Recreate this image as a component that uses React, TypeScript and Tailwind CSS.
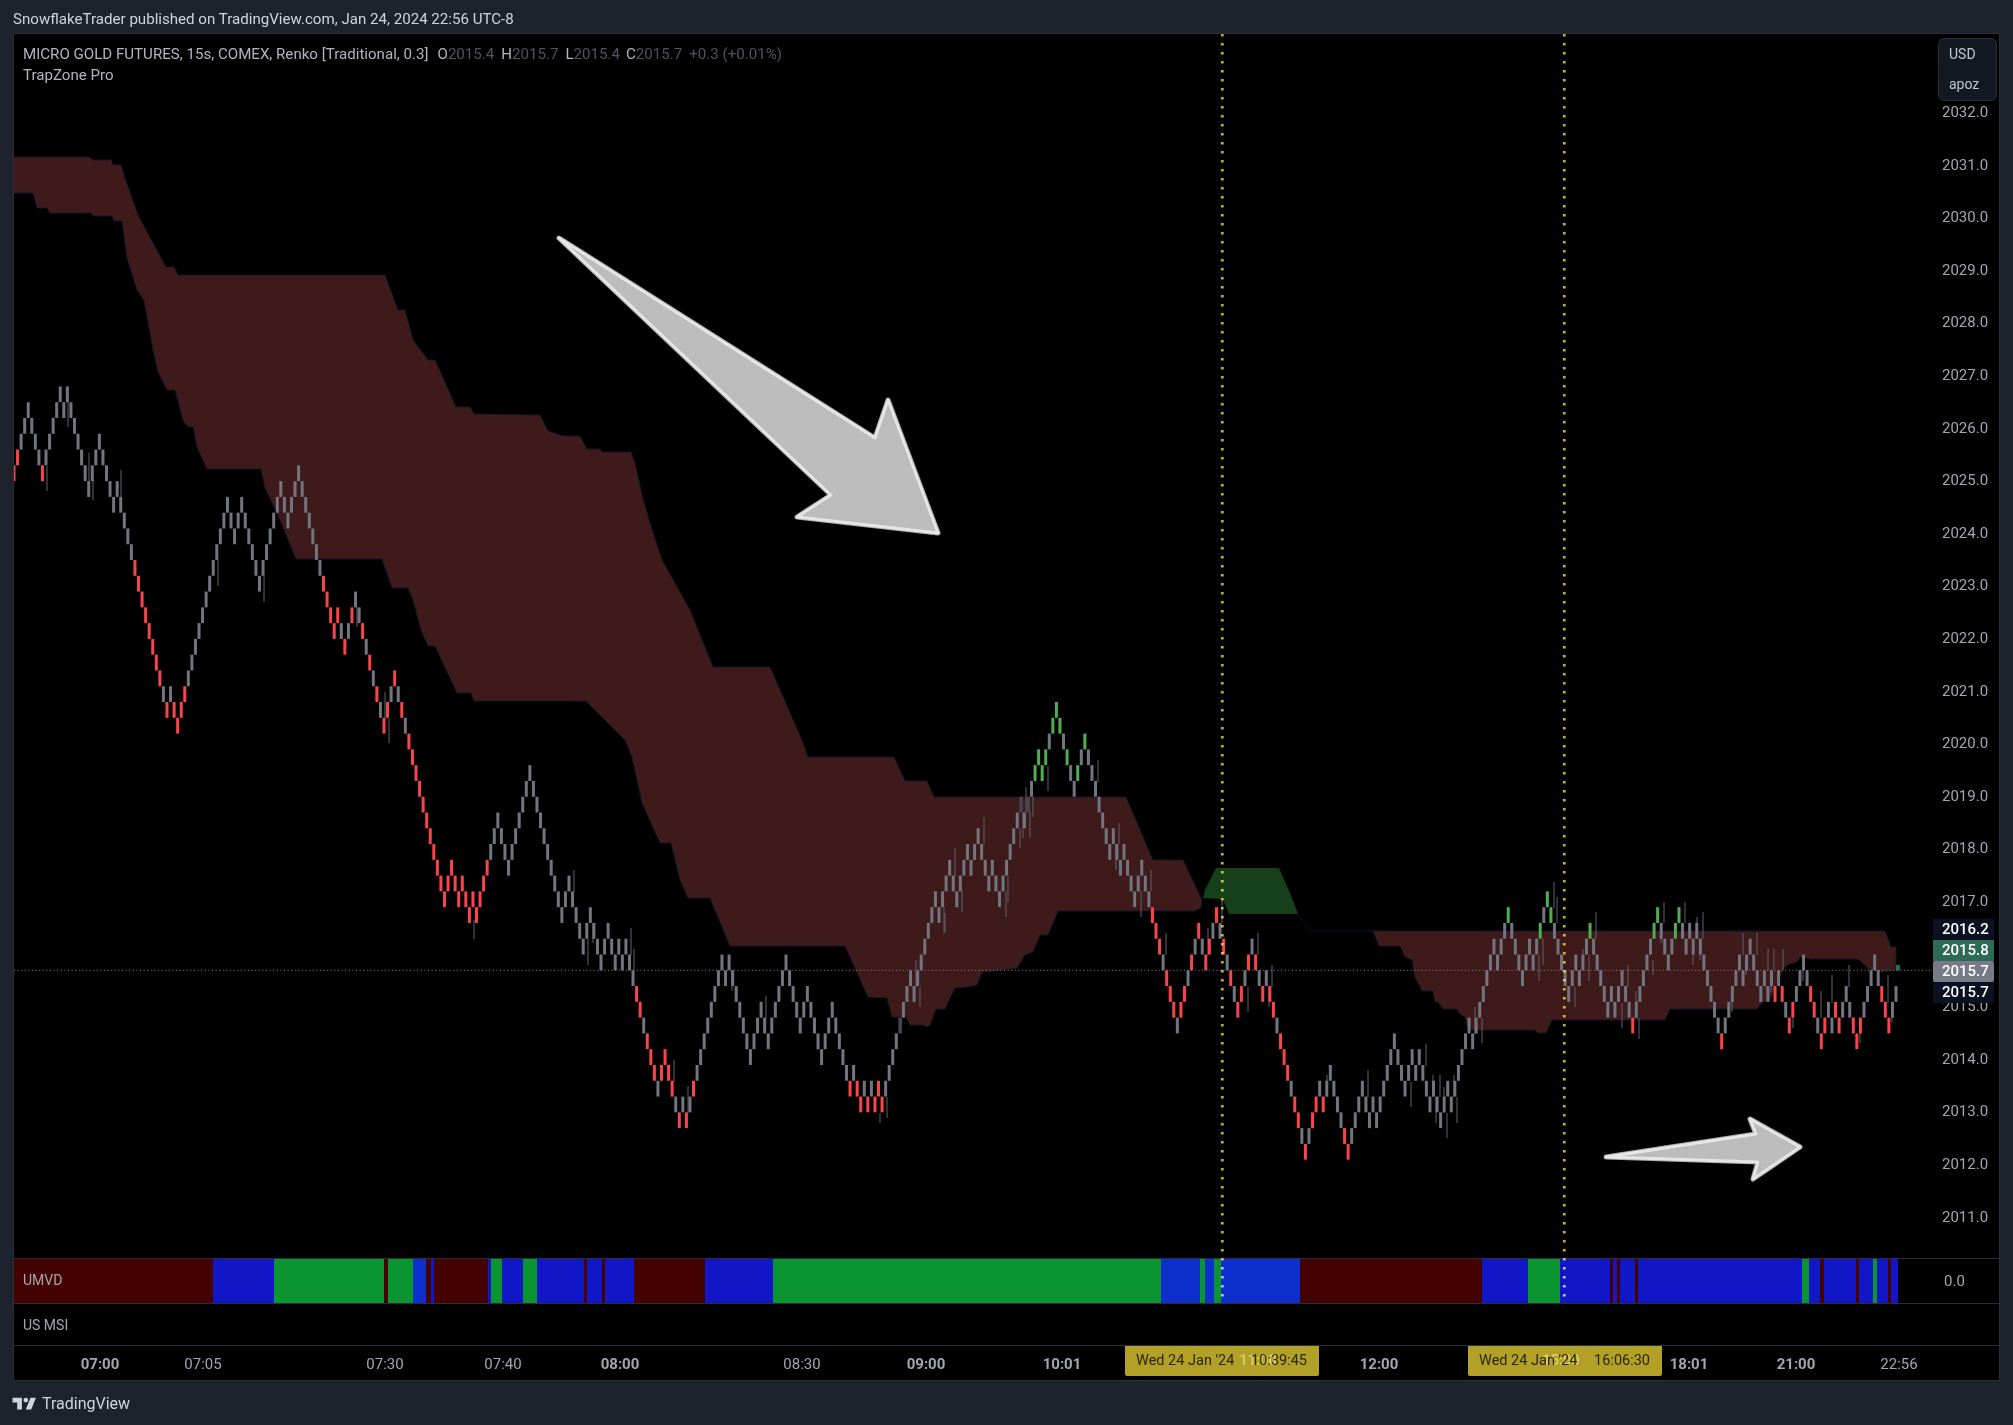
import React from 'react';

// one char per renko brick: u/d gray, R/r red, G/g green, N dark gray (upper case / u = up)
const BRICKS = [
  'RRuuu dddr uuuuu d u dddddd uuu dddd u dddd rrrrrrrrdr u rr RRuuuuuuuuuuuu dd uu ddddd uuuuuu dd uuu',
  'dddddd rrrr R dr uRu drdrdrdr RuR drdrrr rrrrrrrr RR rr R rr R r',
  'RRRuuu ddd uuuuuu ddddddddd uu dddd uu ddd uu dd u d u ddrrdrrrd RR rrdr u r uRuuuuuuuu d u dddddd',
  'uuu dd uuuuu dddd uu dddd uuu ddddr u rr u r u r R r uuuuNuuu d uuuuuu d uuu dd uuu d uu',
  'ddd u dd uuuuuN d NuGG g GuGG gdgdd GuG ddddddd u dd u ddd uu ddrrrdrrrd RRuRuR dr RuR drdrdr RuRu rdr u rrdrrrdrrdr',
  'uRRu r uu dddrr uuuu dd u d uuuuu ddd uu d u ddd u dd uu d uuuuu d uuuuuu d uuG dddd uu d uGuG gddddd',
  'uu d uuG ddddd u d uu ddr uuuuuGG ddd uGG dd u d u ddddddr uuuuu d uu ddd u d u r u rdr Ruuu drrdr Ru d R r uu drr Ruuuu drrr uu',
].join('').replace(/\s/g, '');

const PRICE_Y = 970.3;
const BRICK_H = 15.78;
const FIRST_X = 14;
const LAST_X = 1896;

function buildBricks() {
  const step = (LAST_X - FIRST_X) / (BRICKS.length - 1);
  let open = 31;
  let close = 31;
  let prevUp = true;
  return BRICKS.split('').map((ch, i) => {
    const up = 'uRGN'.includes(ch);
    const from = up === prevUp ? close : open;
    const to = from + (up ? 1 : -1);
    open = from;
    close = to;
    prevUp = up;
    const top = PRICE_Y - Math.max(from, to) * BRICK_H;
    const low = ch.toLowerCase();
    const color = low === 'r' ? '#f8444b' : low === 'g' ? '#4caf50' : ch === 'N' ? '#434651' : '#72757f';
    return { x: FIRST_X + i * step, y: top, color, dark: ch === 'N' };
  });
}

const WICKS = [
  [47, 466, 491], [68, 402, 427], [89, 453, 497], [93, 480, 500], [121, 470, 497], [218, 560, 586], [264, 576, 602],
  [357, 607, 627], [385, 692, 718], [389, 718, 743], [474, 920, 939], [574, 870, 892], [588, 939, 965], [593, 923, 943], [631, 928, 955],
  [634, 949, 970], [674, 1060, 1082], [688, 1086, 1113], [732, 970, 991], [766, 996, 1018], [880, 1113, 1123],
  [887, 1097, 1118], [916, 960, 987], [920, 987, 1007], [945, 913, 933], [955, 848, 876], [962, 890, 912], [984, 817, 844],
  [944, 907, 933], [1006, 891, 917], [1008, 876, 902], [1020, 828, 848], [1023, 812, 838], [1026, 787, 812],
  [1030, 812, 838], [1033, 797, 817], [1048, 766, 791], [1098, 760, 782], [1119, 823, 844], [1116, 844, 870],
  [1141, 891, 917], [1151, 870, 891], [1166, 933, 955], [1208, 928, 955], [1222, 900, 923], [1248, 987, 1012],
  [1258, 933, 955], [1269, 987, 1007], [1272, 965, 987], [1327, 1075, 1097], [1368, 1070, 1097], [1411, 1082, 1107],
  [1426, 1044, 1066], [1433, 1075, 1097], [1436, 1097, 1123], [1440, 1075, 1097], [1444, 1087, 1113], [1447, 1113, 1138],
  [1454, 1075, 1097], [1457, 1097, 1123], [1475, 1007, 1034], [1482, 1018, 1043], [1539, 955, 981], [1543, 939, 965],
  [1554, 882, 908], [1557, 897, 923], [1575, 987, 1007], [1583, 949, 970], [1589, 955, 981], [1596, 912, 939],
  [1622, 1003, 1028], [1628, 965, 987], [1636, 991, 1018], [1639, 1018, 1039], [1653, 960, 975], [1661, 923, 943],
  [1664, 902, 923], [1685, 902, 923], [1693, 939, 965], [1697, 917, 939], [1700, 939, 960], [1703, 912, 939],
  [1732, 987, 1012], [1743, 933, 955], [1746, 955, 975], [1757, 933, 955], [1768, 949, 970], [1771, 970, 992],
  [1774, 949, 970], [1783, 949, 970], [1793, 1003, 1028], [1803, 970, 981], [1821, 991, 1018], [1832, 975, 1003],
  [1849, 965, 987], [1860, 1018, 1043], [1888, 975, 1003], [1892, 1003, 1022],
];

const RIBBON_MAIN =
  '13,157 89,157 93,160 111,160 113,165 121,165 125,178 138,215 166,267 174,267 178,275 385,275 398,310 405,310 413,340 428,360 435,360 456,407 470,407 474,414 540,415 548,431 563,436 580,436 587,449 600,449 602,452 631,452 635,463 642,495 650,523 662,560 690,610 713,667 770,667 802,740 808,757 894,757 905,781 927,781 934,797 1126,797 1153,860 1183,860 1202,900 1201,908 1195,911 ' +
  '1058,911 1048,935 1040,935 1033,952 1025,955 1017,968 1003,970 982,972 977,985 967,987 955,988 945,1009 936,1009 930,1025 927,1027 924,1025 910,1025 906,1017 892,1017 887,998 868,997 845,946 730,946 710,898 688,898 680,880 671,843 660,843 642,803 632,757 625,740 586,701 474,701 471,693 457,693 435,646 428,646 421,630 413,600 408,588 392,588 382,559 296,559 277,513 265,488 261,469 207,469 197,447 193,427 188,427 183,420 175,390 167,390 158,372 153,350 144,300 137,290 127,258 122,221 114,221 112,216 93,216 91,213 50,213 47,208 37,208 33,193 13,193';

const RIBBON_RIGHT =
  '1373,931 1885,931 1891,947 1896,947 1896,970 1880,972 1870,970 1858,959 1810,959 1800,957 1797,962 1787,965 1783,970 1775,988 1770,1000 1763,1002 1757,1009 1670,1009 1665,1020 1552,1020 1546,1033 1538,1033 1535,1030 1468,1030 1465,1017 1460,1014 1457,1009 1443,1009 1438,1002 1435,1002 1433,991 1422,991 1415,977 1412,960 1405,957 1400,946 1379,946';

const GREEN_ZONE = '1216,868 1279,868 1290,893 1298,914 1229,914 1223,899 1203,898 1205,890';
const BIG_ARROW = '559,238 875,438 888,400 938,533 797,517 831,495';
const SMALL_ARROW = '1606,1157 1756,1134 1750,1119 1800,1147 1753,1179 1758,1162';

// 2016.0 sits under the badges in the picture, so its row stays empty
const PRICES = [
  '2032.0', '2031.0', '2030.0', '2029.0', '2028.0', '2027.0', '2026.0', '2025.0', '2024.0', '2023.0', '2022.0',
  '2021.0', '2020.0', '2019.0', '2018.0', '2017.0', '', '2015.0', '2014.0', '2013.0', '2012.0', '2011.0',
];

const BADGES = [
  { text: '2016.2', cls: 'bg-[#0b1022] text-white' },
  { text: '2015.8', cls: 'bg-[#2e6b55] text-white' },
  { text: '2015.7', cls: 'bg-[#787b86] text-white rounded-[2px]' },
  { text: '2015.7', cls: 'bg-[#0b1022] text-white' },
];

const RED = '#450202';
const BLUE = '#1117c6';
const BRIGHT = '#0c2fcd';
const GREEN = '#0a9531';

// UMVD segments: colour and right edge
const UMVD: [string, number][] = [
  [RED, 213], [BLUE, 274], [GREEN, 384], [RED, 388], [GREEN, 413], [BRIGHT, 426], [RED, 431], [BLUE, 434], [RED, 488],
  [BLUE, 491], [GREEN, 502], [BLUE, 523], [GREEN, 537], [BLUE, 584], [RED, 587], [BLUE, 602], [RED, 605], [BLUE, 634],
  [RED, 705], [BLUE, 773], [GREEN, 1161], [BRIGHT, 1200], [GREEN, 1205], [BRIGHT, 1214], [GREEN, 1221], [BRIGHT, 1300],
  [RED, 1482], [BLUE, 1528], [GREEN, 1560], [BLUE, 1610], [RED, 1613], [BLUE, 1617], [RED, 1620], [BLUE, 1635],
  [RED, 1638], [BLUE, 1802], [GREEN, 1809], [BLUE, 1820], [RED, 1824], [BLUE, 1856], [RED, 1859], [BLUE, 1873],
  [GREEN, 1877], [BLUE, 1888], [RED, 1891], [BLUE, 1898],
];

const TIMES: { x: number; text: string; bold?: boolean }[] = [
  { x: 100, text: '07:00', bold: true },
  { x: 203, text: '07:05' },
  { x: 385, text: '07:30' },
  { x: 503, text: '07:40' },
  { x: 620, text: '08:00', bold: true },
  { x: 802, text: '08:30' },
  { x: 926, text: '09:00', bold: true },
  { x: 1062, text: '10:01', bold: true },
  { x: 1379, text: '12:00', bold: true },
  { x: 1689, text: '18:01', bold: true },
  { x: 1796, text: '21:00', bold: true },
  { x: 1899, text: '22:56' },
];

const MARKS = [
  { x: 1125, ghostX: 1258, ghost: '11:00', time: '10:39:45' },
  { x: 1468, ghostX: 1561, ghost: '15:00', time: '16:06:30' },
];

function PriceChart() {
  const bricks = buildBricks();
  return (
    <svg viewBox="14 34 1919 1225" className="block h-[1225px] w-[1919px]">
      <polygon points={RIBBON_MAIN} fill="#3e1a1a" stroke="#17152a" strokeWidth="1" />
      <polygon points={RIBBON_RIGHT} fill="#3e1a1a" stroke="#17152a" strokeWidth="1" />
      <polygon points={GREEN_ZONE} fill="#16401a" />
      <polyline points="1298,914 1310,931 1373,931" fill="none" stroke="#0c1226" strokeWidth="1" />
      {WICKS.map(([x, y1, y2], i) => (
        <line key={i} x1={x} x2={x} y1={y1} y2={y2} stroke="#5f626c" strokeWidth="1" />
      ))}
      {bricks.map((b, i) => (
        <rect key={i} x={b.x - 1.5} y={b.y} width={b.dark ? 3.6 : 3} height={BRICK_H} fill={b.color} />
      ))}
      <rect x="1896" y="965" width="4" height="5.5" fill="#2e6b55" />
      <line x1="14" x2="1933" y1={PRICE_Y} y2={PRICE_Y} stroke="#85888f" strokeWidth="1" strokeDasharray="1 2.6" />
      {[BIG_ARROW, SMALL_ARROW].map((pts) => (
        <g key={pts} strokeLinejoin="round">
          <polygon points={pts} fill="#bcbcbc" stroke="#a9a9a9" strokeWidth="5" />
          <polygon points={pts} fill="#bcbcbc" stroke="#e6e6e6" strokeWidth="2.8" />
        </g>
      ))}
    </svg>
  );
}

function Legend() {
  return (
    <div className="absolute left-[9px] top-[10px] text-[15.1px] leading-[21px] text-[#b2b5be]">
      <div className="flex">
        <span>MICRO GOLD FUTURES, 15s, COMEX, Renko [Traditional, 0.3]</span>
        <span className="ml-[9px]">O<span className="text-[#50535e]">2015.4</span></span>
        <span className="ml-[7px]">H<span className="text-[#50535e]">2015.7</span></span>
        <span className="ml-[7px]">L<span className="text-[#50535e]">2015.4</span></span>
        <span className="ml-[6px]">C<span className="text-[#50535e]">2015.7</span></span>
        <span className="ml-[7px] text-[#50535e]">+0.3 (+0.01%)</span>
      </div>
      <div>TrapZone Pro</div>
    </div>
  );
}

function PriceAxis() {
  return (
    <div className="relative flex-1 pt-[52px] text-[15px] text-[#a3a6af]">
      {PRICES.map((p, i) => (
        <div key={i} className="flex h-[52.6px] items-center pl-[9px]">
          {p}
        </div>
      ))}
      <div className="absolute left-0 top-[885px] w-[61px] font-medium">
        {BADGES.map((b, i) => (
          <div key={i} className={`flex h-[21px] items-center pl-[9px] ${b.cls}`}>
            {b.text}
          </div>
        ))}
      </div>
      <div className="absolute left-[5px] top-[4px] flex h-[63px] w-[59px] flex-col justify-around rounded-[6px] border border-[#2a2e39] bg-[#141823] pl-[10px] text-[14px] text-[#c3c6cf]">
        <span>USD</span>
        <span>apoz</span>
      </div>
    </div>
  );
}

function VerticalMarks() {
  return (
    <svg viewBox="14 34 1986 1266" className="pointer-events-none absolute left-0 top-0 h-[1266px] w-[1986px] mix-blend-screen">
      {[1222.3, 1564.3].map((x) => (
        <line key={x} x1={x} x2={x} y1="34" y2="1300" stroke="#c4ae22" strokeWidth="2.8" strokeDasharray="2.6 6.4" />
      ))}
    </svg>
  );
}

function TimeAxis() {
  return (
    <div className="relative h-[34px] text-[15px] text-[#a3a6af]">
      {TIMES.map((t) => (
        <span
          key={t.text}
          className={`absolute top-[7px] -translate-x-1/2 ${t.bold ? 'font-bold' : ''}`}
          style={{ left: t.x - 14 }}
        >
          {t.text}
        </span>
      ))}
      {MARKS.map((m) => (
        <div
          key={m.time}
          className="absolute top-0 flex h-[30px] w-[194px] items-center rounded-b-[2px] bg-[#b2a126] text-[14.5px] text-[#2b2606]"
          style={{ left: m.x - 14 }}
        >
          <span className="absolute -translate-x-1/2 font-bold text-[#d8cc62]" style={{ left: m.ghostX - m.x }}>
            {m.ghost}
          </span>
          <div className="relative flex w-full justify-between pl-[11px] pr-[12px]">
            <span>Wed 24 Jan '24</span>
            <span>{m.time}</span>
          </div>
        </div>
      ))}
    </div>
  );
}

export default function App() {
  return (
    <div className="flex h-[1425px] w-full flex-col overflow-hidden bg-[#1e222d] font-[Roboto,sans-serif]">
      <div className="flex h-[33px] items-center pl-[13px] pt-[6px] text-[15.1px] text-[#d1d4dc]">
        SnowflakeTrader published on TradingView.com, Jan 24, 2024 22:56 UTC-8
      </div>

      <div className="relative mx-[13px] border border-[#2a2e39] bg-black">
        <div className="relative flex h-[1225px] border-b border-[#2a2e39]">
          <PriceChart />
          <PriceAxis />
          <Legend />
        </div>

        <div className="relative flex h-[45px] border-b border-[#2a2e39]">
          <div className="flex w-[1885px]">
            {UMVD.map(([color, end], i) => {
              const start = i === 0 ? 14 : UMVD[i - 1][1];
              return <div key={i} style={{ width: end - start, backgroundColor: color }} />;
            })}
          </div>
          <span className="absolute left-[9px] top-[11px] text-[14px] text-[#a3a6af]">UMVD</span>
          <span className="flex flex-1 items-center pl-[45px] pt-[1px] text-[15px] text-[#a3a6af]">0.0</span>
        </div>

        <div className="flex h-[42px] items-center border-b border-[#2a2e39] pl-[9px] pt-[2px] text-[14px] text-[#a3a6af]">
          US MSI
        </div>

        <TimeAxis />
        <VerticalMarks />
      </div>

      <div className="flex flex-1 items-center pl-[11px] pt-[1px]">
        <svg viewBox="0 0 36 28" className="h-[22px] w-[28px]" fill="#d1d4dc">
          <path d="M14 6H2v6h6v9h6V6Zm12 15h-7l6-15h7l-6 15Zm-7-9a3 3 0 1 0 0-6 3 3 0 0 0 0 6Z" />
        </svg>
        <span className="ml-[3px] text-[16px] text-[#d1d4dc]">TradingView</span>
      </div>
    </div>
  );
}
